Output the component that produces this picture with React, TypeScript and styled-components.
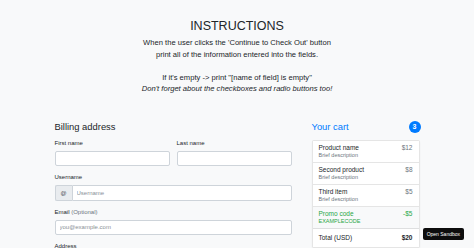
import * as React from "react";
import styled, { createGlobalStyle } from "styled-components";

const GlobalStyle = createGlobalStyle`
  html, body {
    margin: 0;
    padding: 0;
    background: #f8f9fa;
    font-family: "Liberation Sans", Arial, sans-serif;
    color: #212529;
    -webkit-font-smoothing: antialiased;
  }
  * { box-sizing: border-box; }
`;

const Page = styled.div`
  width: 474px;
  height: 248px;
  overflow: hidden;
  padding-top: 18px;
`;

const Header = styled.header`
  text-align: center;
`;

const Title = styled.h2`
  margin: 0 0 3px;
  font-size: 12.5px;
  line-height: 16px;
  font-weight: 400;
`;

const Lead = styled.p`
  margin: 0;
  font-size: 7.6px;
  line-height: 11.5px;
`;

const Container = styled.div`
  width: 365px;
  margin: 25px auto 0;
  display: grid;
  grid-template-columns: 237px 108px;
  column-gap: 20px;
`;

const Heading = styled.h4<{ $blue?: boolean }>`
  margin: 0;
  font-size: 9.4px;
  line-height: 14px;
  font-weight: 400;
  color: ${(p) => (p.$blue ? "#007bff" : "#212529")};
`;

const FormHeading = styled(Heading)`
  margin-bottom: 4px;
`;

const FieldRow = styled.div`
  display: grid;
  grid-template-columns: 1fr 1fr;
  column-gap: 7px;
`;

const Field = styled.div`
  margin-bottom: 6px;
`;

const Label = styled.label`
  display: block;
  font-size: 6px;
  line-height: 10px;
  margin-bottom: 3px;
`;

const Muted = styled.span`
  color: #6c757d;
`;

const Input = styled.input`
  display: block;
  width: 100%;
  height: 15px;
  padding: 0 4px;
  border: 1px solid #ced4da;
  border-radius: 2px;
  background: #fff;
  font-family: inherit;
  font-size: 6px;
  color: #495057;
  outline: none;
  &::placeholder {
    color: #8a9096;
  }
`;

const InputGroup = styled.div`
  display: flex;
  height: 16px;
`;

const Addon = styled.span`
  width: 17px;
  display: flex;
  align-items: center;
  justify-content: center;
  background: #e9ecef;
  border: 1px solid #ced4da;
  border-right: none;
  border-radius: 2px 0 0 2px;
  font-size: 6px;
  color: #495057;
`;

const GroupInput = styled(Input)`
  flex: 1;
  height: 16px;
  border-radius: 0 2px 2px 0;
`;

const CartHead = styled.div`
  display: flex;
  justify-content: space-between;
  align-items: center;
  margin-bottom: 6px;
`;

const Badge = styled.span`
  width: 12px;
  height: 12px;
  margin-right: -1px;
  border-radius: 50%;
  background: #007bff;
  color: #fff;
  font-size: 7px;
  font-weight: 700;
  display: flex;
  align-items: center;
  justify-content: center;
`;

const List = styled.ul`
  list-style: none;
  margin: 0;
  padding: 0;
  background: #fff;
  border: 1px solid rgba(0, 0, 0, 0.1);
  border-radius: 2px;
  box-shadow: 0 1px 2px rgba(0, 0, 0, 0.05);
`;

const Item = styled.li<{ $promo?: boolean }>`
  display: flex;
  justify-content: space-between;
  align-items: flex-start;
  padding: 3px 6px 3px 6px;
  border-bottom: 1px solid rgba(0, 0, 0, 0.1);
  background: ${(p) => (p.$promo ? "#f8f9fa" : "#fff")};
  color: ${(p) => (p.$promo ? "#28a745" : "#212529")};
  &:last-child {
    border-bottom: none;
    align-items: center;
    padding: 4px 6px;
    min-height: 18px;
  }
`;

const ItemName = styled.div`
  font-size: 6.5px;
  line-height: 8px;
`;

const ItemDesc = styled.div<{ $promo?: boolean }>`
  font-size: 5.5px;
  line-height: 7px;
  color: ${(p) => (p.$promo ? "#28a745" : "#6c757d")};
`;

const Price = styled.span<{ $strong?: boolean; $promo?: boolean }>`
  font-size: 6.5px;
  line-height: 8px;
  font-weight: ${(p) => (p.$strong ? 700 : 400)};
  color: ${(p) => (p.$strong ? "#212529" : p.$promo ? "#28a745" : "#6c757d")};
`;

const SandboxButton = styled.button`
  position: fixed;
  right: 10px;
  bottom: 8px;
  height: 12px;
  padding: 0 4px;
  border: none;
  border-radius: 2px;
  background: #0d0d0d;
  color: #fff;
  font-family: inherit;
  font-size: 5px;
  line-height: 12px;
`;

interface CartItem {
  name: string;
  desc: string;
  price: string;
}

const items: CartItem[] = [
  { name: "Product name", desc: "Brief description", price: "$12" },
  { name: "Second product", desc: "Brief description", price: "$8" },
  { name: "Third item", desc: "Brief description", price: "$5" },
];

export default function App(): JSX.Element {
  return (
    <Page>
      <GlobalStyle />
      <Header>
        <Title>INSTRUCTIONS</Title>
        <Lead>
          When the user clicks the 'Continue to Check Out' button
          <br />
          print all of the information entered into the fields.
          <br />
          <br />
          If it's empty -&gt; print "[name of field] is empty"
          <br />
          <em>Don't forget about the checkboxes and radio buttons too!</em>
        </Lead>
      </Header>

      <Container>
        <form>
          <FormHeading>Billing address</FormHeading>
          <FieldRow>
            <Field>
              <Label>First name</Label>
              <Input />
            </Field>
            <Field>
              <Label>Last name</Label>
              <Input />
            </Field>
          </FieldRow>
          <Field>
            <Label>Username</Label>
            <InputGroup>
              <Addon>@</Addon>
              <GroupInput placeholder="Username" />
            </InputGroup>
          </Field>
          <Field>
            <Label>
              Email <Muted>(Optional)</Muted>
            </Label>
            <Input placeholder="you@example.com" />
          </Field>
          <Field>
            <Label>Address</Label>
            <Input placeholder="1234 Main St" />
          </Field>
        </form>

        <aside>
          <CartHead>
            <Heading $blue>Your cart</Heading>
            <Badge>3</Badge>
          </CartHead>
          <List>
            {items.map((item, index) => (
              <Item key={index}>
                <div>
                  <ItemName>{item.name}</ItemName>
                  <ItemDesc>{item.desc}</ItemDesc>
                </div>
                <Price>{item.price}</Price>
              </Item>
            ))}
            <Item $promo>
              <div>
                <ItemName>Promo code</ItemName>
                <ItemDesc $promo>EXAMPLECODE</ItemDesc>
              </div>
              <Price $promo>-$5</Price>
            </Item>
            <Item>
              <ItemName>Total (USD)</ItemName>
              <Price $strong>$20</Price>
            </Item>
          </List>
        </aside>
      </Container>

      <SandboxButton>Open Sandbox</SandboxButton>
    </Page>
  );
}
